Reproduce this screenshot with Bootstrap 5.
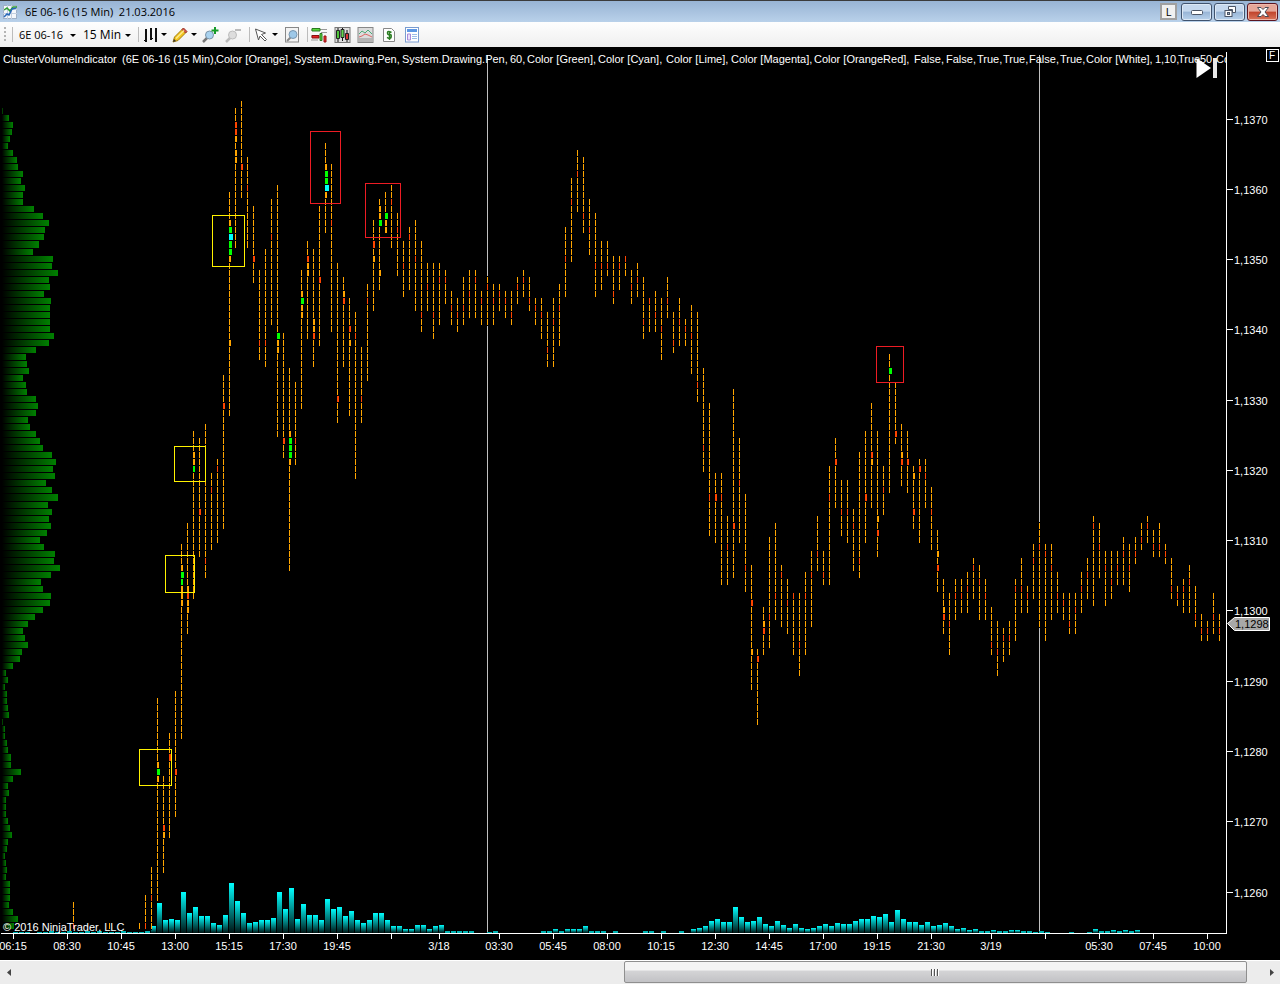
<!DOCTYPE html>
<html lang="en">
<head>
<meta charset="utf-8">
<meta name="viewport" content="width=device-width, initial-scale=1">
<title>6E 06-16 (15 Min) 21.03.2016</title>
<link href="https://cdn.jsdelivr.net/npm/bootstrap@5.3.0/dist/css/bootstrap.min.css" rel="stylesheet">
<style>
  body { font-family: "Open Sans", "Noto Sans", sans-serif; font-size: 12px; line-height: 16px; color: #000; background: #000; }
  button, select { color: inherit; font: inherit; }
  .title-bar { height: 22px; padding: 0 2px 0 3px; background: linear-gradient(#98b4d4, #b9d1ea); border-top: 1px solid #3b3b3b; }
  .title-text { white-space: pre; margin-left: 8px; font-size: 11px; }
  .link-btn { width: 17px; height: 17px; padding: 0; border: 2px solid #a0a0a0; background: #f0f0f0; font-size: 11px; line-height: 12px; margin-right: 4px; }
  .win-buttons { gap: 2px; }
  .win-btn { width: 31px; height: 18px; padding: 0; border: 1px solid #40536e; border-radius: 3px; display: flex; align-items: center; justify-content: center; background: linear-gradient(#c5d8ee 0 45%, #98b5d6 50%, #b9d2ec); box-shadow: inset 0 0 0 1px #dce8f5; }
  .win-close { border-color: #5b1521; background: linear-gradient(#e5a799 0 45%, #c0432b 50%, #d9765c); box-shadow: inset 0 0 0 1px #eeb8ab; }
  .tool-bar { height: 25px; padding-left: 4px; background: linear-gradient(#fefefe, #efefef); }
  .grip { width: 2px; height: 15px; background: repeating-linear-gradient(#b4b4b4 0 2px, transparent 2px 4px); margin-right: 6px; }
  .sep { width: 1px; height: 15px; background: #bcbcbc; }
  .pick { position: relative; }
  .pick select { appearance: none; border: 0; background: transparent; padding: 0 0 0 6px; line-height: 16px; height: 20px; outline-offset: -1px; width: 100%; }
  .caret::after { content: ""; border: 3px solid transparent; border-top-color: #000; border-bottom-width: 0; }
  .pick::after { position: absolute; right: 1px; top: 9px; }
  .w-sym { width: 64px; font-size: 11px; }
  .w-int { width: 55px; margin-right: 6px; }
  .tool { border: 0; background: transparent; padding: 0; height: 20px; display: flex; align-items: center; justify-content: center; gap: 3px; }
  .t22 { width: 23px; } .t30 { width: 30px; }
  .chart { background: #000; min-height: 0; }
  .chart text { font-family: "Liberation Sans", Arial, sans-serif; font-size: 11px; fill: #fff; }
  .h-scroll { height: 24px; background: #ececec; border-top: 1px solid #fff; padding-bottom: 1px; }
  .arrow-btn { width: 17px; border: 0; padding: 0; background: transparent; display: flex; align-items: center; justify-content: center; }
  .thumb { border: 1px solid #8f8f8f; border-radius: 2px; background: linear-gradient(#f4f4f4 0 40%, #d4d4d6 45%, #c2c2c5); display: flex; align-items: center; justify-content: center; }
  .thumb-grip { width: 8px; height: 7px; background: repeating-linear-gradient(90deg, #555 0 1px, #fff 1px 2px, transparent 2px 3px); }
  .arrow-end { width: 33px; padding-left: 16px; }
</style>
</head>
<body class="vh-100 d-flex flex-column overflow-hidden">

<header class="title-bar d-flex align-items-center flex-shrink-0">
  <svg width="14" height="14" viewBox="0 0 14 14"><rect x=".5" y=".5" width="13" height="13" fill="#f4f7fb" stroke="#9fb0c6"/><path d="M4.500 0v14M8.500 0v14M0 4.500h14M0 8.500h14" stroke="#c3cfe0"/><path d="M1 5l3-2 3 3 3-4h4" fill="none" stroke="#2fa02f" stroke-width="1.500"/><path d="M1 12l3-3 2 1 3-6 4-1" fill="none" stroke="#2868b8" stroke-width="1.500"/></svg>
  <span class="title-text me-auto">6E 06-16 (15 Min)  21.03.2016</span>
  <button class="link-btn" type="button">L</button>
  <div class="win-buttons d-flex">
    <button class="win-btn" type="button" aria-label="Minimize"><svg width="12" height="6"><rect x=".5" y="1.500" width="11" height="4" rx="1" fill="#fff" stroke="#4b5566"/></svg></button>
    <button class="win-btn" type="button" aria-label="Restore"><svg width="12" height="12"><path d="M4.500.5h7v6h-3v-3h-4z" fill="#fff" stroke="#4b5566"/><rect x="1" y="4.500" width="7" height="6" fill="#fff" stroke="#4b5566"/><rect x="3.500" y="6.500" width="2" height="2" fill="#9ab" stroke="#4b5566"/></svg></button>
    <button class="win-btn win-close" type="button" aria-label="Close"><svg width="12" height="10"><path d="M.5.5h3.500l2 2 2-2h3.500l-3.500 4.500 3.500 4.500h-3.500l-2-2-2 2h-3.500l3.500-4.500z" fill="#fff" stroke="#4b4b55"/></svg></button>
  </div>
</header>

<nav class="tool-bar d-flex align-items-center flex-shrink-0" aria-label="Chart tools">
  <span class="grip"></span><span class="sep"></span>
  <label class="pick caret w-sym"><select aria-label="Instrument"><option>6E 06-16</option></select></label>
  <label class="pick caret w-int"><select aria-label="Interval"><option>15 Min</option></select></label>
  <span class="sep"></span>
  <button class="tool caret t30" type="button" aria-label="Bar style"><svg width="16" height="16"><path d="M4 2v13M9 1v12M14 1v14" stroke="#111" stroke-width="2"/><path d="M2 13.500h2M9 11.500h2" stroke="#111"/></svg></button>
  <button class="tool caret t30" type="button" aria-label="Draw"><svg width="16" height="16"><path d="M1 15l1.500-5L11 1.500 14.500 5 6 13.500z" fill="#f3c41c" stroke="#a37f10"/><path d="M10 2.500L11.500 1 15 4.500 13.500 6z" fill="#d9534a" stroke="#9b3a33"/><path d="M4 11.500L12 3.500" stroke="#fdeb8e" stroke-width="1.500"/><path d="M1 15l1-3 2 2z" fill="#333"/></svg></button>
  <button class="tool t22" type="button" aria-label="Zoom in"><svg width="17" height="16"><path d="M6 10l-5 5" stroke="#777" stroke-width="2.500"/><circle cx="7.500" cy="8" r="4" fill="#a9d2ef" stroke="#7b94a8"/><path d="M13 0v7M9.500 3.500h7" stroke="#169b28" stroke-width="2"/></svg></button>
  <button class="tool t22" type="button" aria-label="Zoom out"><svg width="17" height="16"><path d="M6 10l-5 5" stroke="#bbb" stroke-width="2.500"/><circle cx="7.500" cy="8" r="4" fill="#ddd" stroke="#bdbdbd"/><path d="M10 3h6" stroke="#bbb" stroke-width="2"/></svg></button>
  <span class="sep ms-1"></span>
  <button class="tool caret t30" type="button" aria-label="Pointer"><svg width="16" height="16"><path d="M2.500 2l10 4-4 1.500 5 5-1.500 1.500-5-5-1.500 4z" fill="#fff" stroke="#555"/></svg></button>
  <button class="tool t22" type="button" aria-label="Zoom frame"><svg width="16" height="16"><rect x="1.500" y=".5" width="13" height="14.500" fill="#f3f3f3" stroke="#888"/><path d="M7 10l-4 4" stroke="#888" stroke-width="2"/><circle cx="9" cy="7.500" r="4" fill="#9dc8e8" stroke="#7896b0"/></svg></button>
  <span class="sep ms-1"></span>
  <button class="tool t22" type="button" aria-label="Market depth"><svg width="17" height="16"><path d="M0 3h6M9 2.500h7M0 9h5M10 5.500h6M0 13h7" stroke="#999"/><path d="M1 1.500h8v2.500H1z" fill="#58d63c" stroke="#2a7a20"/><path d="M1 8.500h7v2.500H1z" fill="#e32222" stroke="#811"/><path d="M9 6.500h2v7H9z" fill="#58d63c" stroke="#2a7a20"/><path d="M13 9h2v6h-2z" fill="#e33" stroke="#911"/></svg></button>
  <button class="tool t22" type="button" aria-label="Candles"><svg width="17" height="16"><rect x="1" y=".5" width="15" height="15" fill="#ddd" stroke="#777"/><path d="M4 1v14M8.500 1v13M13 3v12" stroke="#111"/><path d="M2.500 3.500h3v8h-3z" fill="#4fc43a" stroke="#222"/><path d="M7 2.500h3v8H7z" fill="#65d850" stroke="#222"/><path d="M11.500 6.500h3v6h-3z" fill="#dc3535" stroke="#222"/></svg></button>
  <button class="tool t22" type="button" aria-label="Indicators"><svg width="17" height="16"><rect x="1" y=".5" width="15" height="15" fill="#dcdcdc" stroke="#888"/><path d="M2 11h13v4H2z" fill="#b5b5b5"/><path d="M2 7l3-3 3 2 3-3 4 4" fill="none" stroke="#4ba978"/><path d="M2 10l3-1 3-2 3 1 4 2" fill="none" stroke="#d66"/></svg></button>
  <button class="tool t22" type="button" aria-label="Strategies"><svg width="14" height="16"><path d="M1.500 1.500h8l3 3v10h-11z" fill="#fff" stroke="#888"/><path d="M9.500 5.500q-4-2-4 .3t2 1.700 1.700 2.300-4.200.5M7.500 4v9" fill="none" stroke="#2b7d22" stroke-width="1.500"/></svg></button>
  <button class="tool t22" type="button" aria-label="Properties"><svg width="15" height="16"><rect x="1.500" y=".5" width="13" height="14.500" fill="#fff" stroke="#7a9cd0"/><path d="M3 2h10v3H3z" fill="#5d97e4"/><path d="M3.500 7h3v6h-3z" fill="#eadffa" stroke="#a78bd8"/><path d="M8 7.500h5M8 9.500h5M8 11.500h5" stroke="#9bbce8"/></svg></button>
</nav>

<main class="chart flex-grow-1">
  <svg id="plot" class="d-block w-100 h-100" viewBox="0 47 1280 913" preserveAspectRatio="xMinYMin meet" shape-rendering="crispEdges" role="img" aria-label="Cluster volume chart">
    <defs>
      <linearGradient id="gProfile"><stop offset="0" stop-color="#000"/><stop offset="1" stop-color="#008000"/></linearGradient>
      <linearGradient id="gVolume" x2="0" y2="1"><stop offset="0" stop-color="#00ffff"/><stop offset="1" stop-color="#001414"/></linearGradient>
      <clipPath id="plotArea"><path d="M0 47h1226v886H0z"/></clipPath>
    </defs>
  </svg>
</main>

<footer class="h-scroll d-flex flex-shrink-0">
  <button class="arrow-btn me-auto" type="button" aria-label="Scroll left"><svg width="4" height="7"><path d="M4 0v7L0 3.500z" fill="#444"/></svg></button>
  <div class="thumb" style="width:48.7%" role="scrollbar" aria-controls="plot" aria-valuenow="100" aria-orientation="horizontal"><span class="thumb-grip"></span></div>
  <button class="arrow-btn arrow-end" type="button" aria-label="Scroll right"><svg width="4" height="7"><path d="M0 0v7l4-3.500z" fill="#444"/></svg></button>
</footer>

<script src="https://cdn.jsdelivr.net/npm/bootstrap@5.3.0/dist/js/bootstrap.bundle.min.js"></script>
<script>
// One entry per 15-minute bar: top, bottom, then marked price levels.
// r/R = thin/wide orange-red, O = wide orange, g/G = green, C = cyan.
const bars = `895 931 r923|867 931 r895|698 901 O762 G769 O776|776 873 R825 O832|733 838 R754|691 817 R769
544 739 O565 G572 g579 O586 O593 O600|523 634 O586 R593 O600 O607|431 599 O452 O459 g466|438 557 R509|424 578 r558|473 550 r487|459 543 r466|375 529 R403
192 416 O220 G227 C234 G241 G249 O256 O340|108 248 R122 R129 O136 O150 O157|101 198 R164|157 248 r185|206 283 R256|270 360 r340|249 367 r340|199 325 r234
185 437 G333 O340 O347|333 458 R438|368 571 O431 G438 G445 G452 O459|382 465 r438|270 409 O291 G298 O305 O312|241 339 R256 O263 O270|249 367 O319 O326 R333|206 346 R277
143 233 O164 G171 G178 C185 O192|164 332 r220|263 423 R396|277 367 O291 R298|298 416 R326 O340|312 479 r333|347 423 r396|284 381 r298|220 311 R241 O256
199 290 O206 O213 G220 O270|192 233 G213 O220 O227|185 248 r199|213 276 r227|241 297 r263|227 290 r234|220 311 r256|241 332 r312|263 311 r284|263 339 r312|263 325 r277|270 304 r277
291 325 r305|298 332 r312|277 325 r305|270 318 r291|270 318 r277|291 325 r298|277 325 r284|284 325 r298|284 311 r291|291 318 r298|291 325 r312|277 304 r284|270 297 r277|277 311 r298
298 325 r305|298 339 r312|312 367 r347|298 367 r319|284 346 r305|227 297 r256|178 262 r199|150 212 r171|157 233 r213|199 255 r227|213 297 r263|241 290 r263|241 276 r263|256 304 r291
256 290 r263|256 276 r256|270 304 r284|263 297 r277|277 339 r319|298 332 r298|291 332 r312|298 360 r326|277 318 r298|312 353 r340|298 346 r319|319 346 r326|305 374 r333|312 402 r382
368 472 r445|403 536 r494|473 543 R494|473 585 r494|516 585 r544|389 578 R523|438 543 r480|494 592 r565|565 690 R600 O649|649 725 R656|607 655 O621 R628|537 648 r614|523 620 r593
565 627 r572|579 634 r600|593 655 r593|593 676 r642|572 655 r593|551 627 r572|516 571 r551|551 585 r572|466 585 r494|438 508 R459|480 536 r509|480 543 r509|509 571 r523|452 578 r558
431 543 R494|403 508 R452 O459|431 557 O516 R530|466 515 r487|354 493 G368|382 444 R431|424 486 O452 R459|431 493 R459|466 529 O473 R509|459 543 R466|459 508 r473|487 550 r509
530 592 O551 R565|579 634 O607 R614|593 655 r621|579 620 r593|579 613 r593|572 613 r586|558 599 r565|565 620 r579|579 620 r593|607 655 r642|621 676 r649|628 662 r635|621 655 r635
579 641 r586|558 613 r586|586 613 r593|544 599 r558|523 627 r544|544 641 r551|544 620 r565|572 613 r593|593 620 r600|593 634 r621|593 634 r607|572 613 r586|558 599 r572|516 606 r523
523 578 r544|551 606 r565|551 599 r579|551 585 r565|537 585 r551|544 592 r565|537 564 r551|523 550 r537|516 543 r523|530 557 r544|523 557 r544|544 564 r551|558 599 r586|586 606 r593
579 613 r586|565 613 r579|586 627 r614|614 641 r628|621 641 r628|593 634 r614|614 641 r628`.split(/[|\n]/);

// Right edge of each price level in the volume profile, top level first.
const profile = [3,9,13,12,10,8,13,17,18,23,21,25,23,23,34,43,49,45,44,39,33,53,52,58,49,50,44,51,50,50,50,50,54,49,36,26,27,29,23,26,27,36,38,36,28,30,36,40,43,52,56,53,55,46,52,58,48,52,49,51,47,40,44,55,54,60,51,41,43,51,50,43,35,28,23,25,28,22,20,13,6,8,5,7,7,8,9,3,5,5,7,8,11,11,21,13,8,9,6,6,6,8,10,12,8,7,5,6,7,6,10,10,10,9,13,18,14];

// Volume histogram: first bar position, then the heights.
const volume = [
  [13, [1,1,1,0,1,1,2,1,1,2,1,1,2,1,2,1,1,1,2,1,1,1,2]],
  [151, [7,30,13,14,13,41,20,26,17,17,10,8,18,50,32,20,10,11,13,13,15,41,24,45,14,29,18,18,13,34,24,26,17,22,13,10,13,20,20,13,7,7,4,4,8,8,4,7,8,2,2,2,2,2,0,0,1,2]],
  [541, [2,2,4,2,4,4,4,7,2,2,2,0,2,0,0,0,0,2,2,0,2]],
  [679, [2,0,4,5,7,12,14,11,11,26,16,11,12,16,9,7,12,8,5,9,5,4,5,7,9,7,10,9,9,12,14,14,17,16,19,11,23,14,11,11,8,11,7,8,10,7,4,5,3,4,2,2,3,2,2,3,3,2,2,1,2]],
  [1045, [1,0,0,0,1,0,0,1,4,2,2,3,2,3,2,3]]
];

const NS = 'http://www.w3.org/2000/svg', plot = document.getElementById('plot');
function add(tag, attrs, parent = plot, text) {
  const el = document.createElementNS(NS, tag);
  for (const k in attrs) el.setAttribute(k, attrs[k]);
  if (text) el.textContent = text;
  return parent.appendChild(el);
}
const rect = (x, y, width, height, fill, parent) => add('rect', { x, y, width, height, fill }, parent);
const level = r => Math.floor(101.44 + 7.0275 * r);
const rowOf = y => Math.round((y - 101.44) / 7.0275);
const body = add('g', { 'clip-path': 'url(#plotArea)' });

profile.forEach((right, i) => rect(2, level(i + 1), right - 2, level(i + 2) - level(i + 1) - 1, right < 4 ? '#004000' : 'url(#gProfile)', body));
[487, 1039].forEach(x => rect(x, 55, 1, 878, '#c0c0c0', body));

const marks = { r: ['#ff4500', 1], R: ['#ff4500', 2], O: ['#ffa500', 2], g: ['#00ff00', 2], G: ['#00ff00', 3], C: ['#00ffff', 4] };
function drawBar(x, spec) {
  const [top, bottom, ...marked] = spec.split(' ');
  const lit = {};
  marked.forEach(m => lit[rowOf(+m.slice(1))] = marks[m[0]]);
  const first = rowOf(+top), last = rowOf(+bottom + 1);
  rect(x, level(first) - 1, 1, level(last) - level(first) + 1, '#000', body);
  for (let r = first; r < last; r++) {
    const [fill, w] = lit[r] || ['#ffa500', 1];
    rect(x, level(r), w, level(r + 1) - level(r) - 1, fill, body);
  }
}
volume.forEach(([x0, hs]) => hs.forEach((h, i) => h && rect(x0 + 6 * i, 933 - h, 5, h, h < 3 ? '#00b4b4' : 'url(#gVolume)', body)));
bars.forEach((spec, i) => drawBar(145 + 6 * i, spec));
drawBar(73, '902 931 r923');
drawBar(109, '923 931');
drawBar(139, '923 931');

[[212,215,33,52,'#fff200'],[174,446,32,36,'#fff200'],[165,555,30,38,'#fff200'],[139,749,33,37,'#fff200'],
 [310,131,31,73,'#ed1c24'],[365,183,36,55,'#ed1c24'],[876,346,28,37,'#ed1c24']]
  .forEach(([x, y, w, h, c]) => add('rect', { x: x + .5, y: y + .5, width: w - 1, height: h - 1, fill: 'none', stroke: c }));

// Axes
rect(1226, 52, 1, 882, '#fff');
rect(1, 933, 1226, 1, '#fff');
for (let k = 0; k < 12; k++) {
  const y = Math.floor(119.1 + 70.27 * k);
  rect(1227, y, 6, 1, '#fff');
  add('text', { x: 1234, y: y + 5 }, plot, '1,1' + (370 - 10 * k));
}
[[13,'06:15'],[67,'08:30'],[121,'10:45'],[175,'13:00'],[229,'15:15'],[283,'17:30'],[337,'19:45'],[391,''],[439,'3/18'],[499,'03:30'],[553,'05:45'],[607,'08:00'],[661,'10:15'],[715,'12:30'],[769,'14:45'],[823,'17:00'],[877,'19:15'],[931,'21:30'],[991,'3/19'],[1045,''],[1099,'05:30'],[1153,'07:45'],[1207,'10:00']]
  .forEach(([x, t]) => { rect(x, 934, 1, 5, '#fff'); if (t) add('text', { x, y: 950, 'text-anchor': 'middle' }, plot, t); });

add('path', { d: 'M1227.5 623.500l7-6h35v13h-35z', fill: '#a8a8a8', stroke: '#fff', 'shape-rendering': 'auto' });
add('text', { x: 1235, y: 628, style: 'fill:#000' }, plot, '1,1298');

// Overlay captions and buttons; the indicator parameters start at their own stops
const caption = add('text', { y: 63 }, body);
[[3,'ClusterVolumeIndicator'],[122,'(6E 06-16 (15 Min),'],[216,'Color [Orange],'],[294,'System.Drawing.Pen,'],[402,'System.Drawing.Pen,'],[510,'60,'],[527,'Color [Green],'],[598,'Color [Cyan],'],[666,'Color [Lime],'],[731,'Color [Magenta],'],[814,'Color [OrangeRed],'],[914,'False,'],[946,'False,'],[977,'True,'],[1003,'True,'],[1029,'False,'],[1060,'True,'],[1086,'Color [White],'],[1155,'1,'],[1164,'10,'],[1178,'True'],[1200,'50,'],[1216,'Co']]
  .forEach(([x, t]) => add('tspan', { x }, caption, t));
add('text', { x: 3, y: 931 }, body, '© 2016 NinjaTrader, LLC');
add('path', { d: 'M1196.500 58v20l14.500-10z', fill: '#fff', 'shape-rendering': 'auto' });
rect(1213, 58, 4, 20, '#e8e8e8');
add('rect', { x: 1266.5, y: 49.5, width: 12, height: 12, fill: '#000', stroke: '#fff' });
add('text', { x: 1269, y: 59, style: 'font-size:10px' }, plot, 'F');
</script>
</body>
</html>
